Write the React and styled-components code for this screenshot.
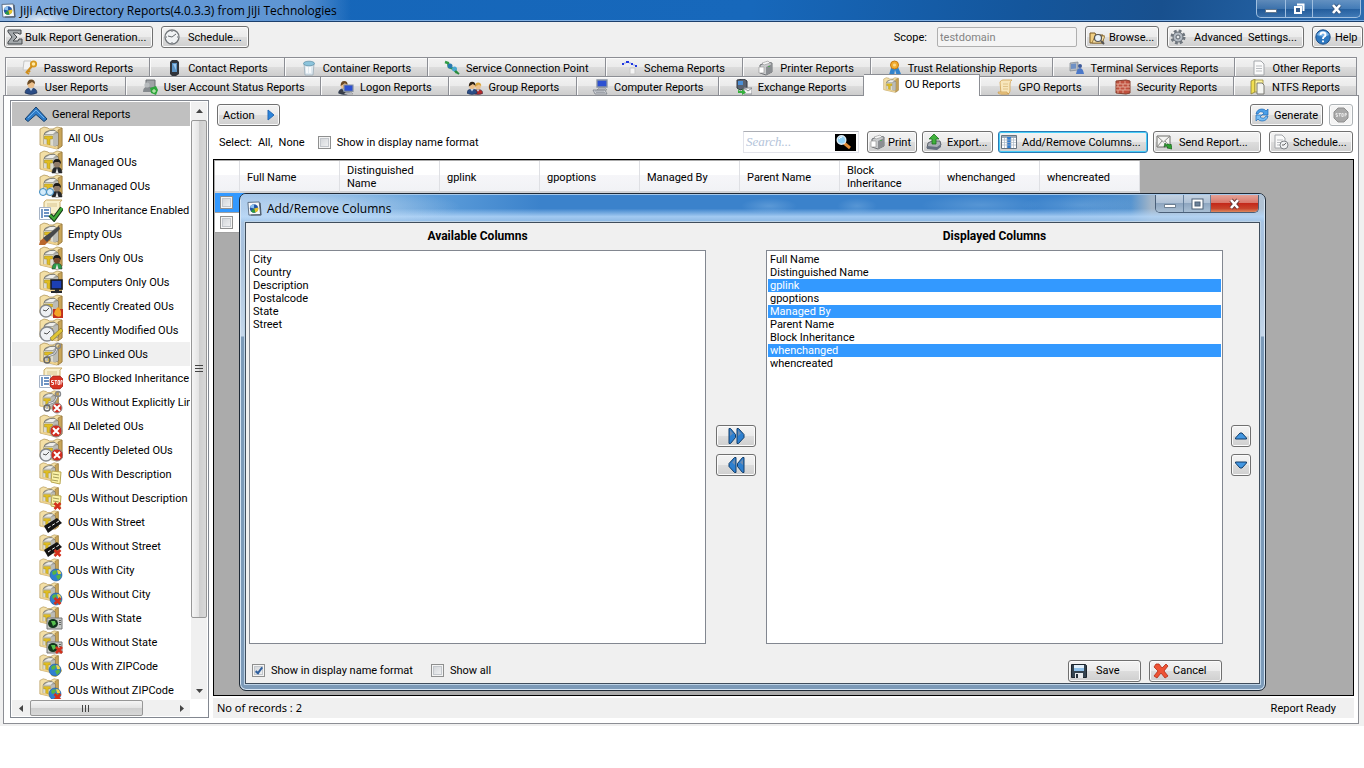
import React from "react";
import styled, { createGlobalStyle, css } from "styled-components";

const GlobalStyle = createGlobalStyle`
  *, *::before, *::after { box-sizing: border-box; }
  body { margin: 0; background: #fff; }
  body, button, input, select, table {
    font-family: Roboto, "Liberation Sans", Arial, sans-serif;
    font-size: 11px;
    line-height: 13px;
    color: #000;
  }
  svg { display: block; flex: none; }
`;

/* ---------- window frame ---------- */

const Window = styled.div`
  display: flex;
  flex-direction: column;
  background: #f0f0f0;
`;

const TitleBar = styled.header`
  display: flex;
  justify-content: space-between;
  height: 22px;
  border-bottom: 1px solid #1c3f6c;
  box-shadow: inset 0 -1px #7fb0e4;
  background: linear-gradient(100deg, #1565b8 0%, #1768bb 55%, #14569c 75%, #18508e 85%, #2b6cb0 100%);
`;

const Title = styled.h1`
  display: flex;
  align-items: center;
  gap: 4px;
  margin: 0;
  padding: 0 14px 0 1px;
  font: 400 12px/20px "Open Sans", sans-serif;
  white-space: nowrap;
  background:
    radial-gradient(ellipse 30px 10px at 42px 20px, rgba(255, 255, 255, 0.8), transparent),
    linear-gradient(90deg, #8db3e0, #6499d6 40%, #5e95d3 85%, transparent);
`;

const WindowButtons = styled.div`
  display: flex;
  margin-right: 3px;
  height: 18px;
  border: 1px solid #9fbfe0;
  border-top: 0;
  border-radius: 0 0 5px 5px;
  overflow: hidden;
`;

const WindowButton = styled.button`
  display: flex;
  align-items: center;
  justify-content: center;
  width: ${(p) => p.$width}px;
  padding: 0;
  border: 0;
  border-right: 1px solid ${(p) => (p.$glass ? "#66809c" : "#9fbfe0")};
  background: ${(p) => p.$danger
    ? "linear-gradient(#e5a297 0%, #d9796c 45%, #c4291a 50%, #c8452c 80%, #dd8a60 100%)"
    : p.$glass
      ? "linear-gradient(#c3d2e2 0%, #b0c2d6 45%, #8ea6c0 50%, #a9bfd4 100%)"
      : "linear-gradient(rgba(255,255,255,.28), rgba(255,255,255,.12) 50%, rgba(0,20,60,.12) 52%, rgba(255,255,255,.1))"};
  &:last-child { border-right: 0; }
`;

/* ---------- shared controls ---------- */

const Button = styled.button`
  display: flex;
  align-items: center;
  justify-content: ${(p) => p.$justify || "flex-start"};
  gap: ${(p) => p.$gap || 4}px;
  width: ${(p) => p.$width}px;
  height: 22px;
  flex: none;
  padding: 0 ${(p) => p.$pad ?? 3}px;
  border: 1px solid #707070;
  border-radius: 3px;
  background: linear-gradient(#f3f3f3 0%, #ebebeb 49%, #dddddd 50%, #cfcfcf 100%);
  box-shadow: inset 0 0 0 1px #fbfbfb;
  white-space: nowrap;
  ${(p) => p.$focused && css`
    border-color: #2a7bb5;
    box-shadow: inset 0 0 0 1px #48cdf8;
  `}
  &:disabled { border-color: #adb2b5; background: #f4f4f4; }
`;

const CheckLabel = styled.label`
  display: flex;
  align-items: center;
  gap: 6px;
  white-space: nowrap;
`;

const CheckBox = styled.input.attrs({ type: "checkbox" })`
  appearance: none;
  display: grid;
  place-items: center;
  width: 13px;
  height: 13px;
  margin: 0;
  border: 1px solid #8e8f8f;
  background: linear-gradient(135deg, #cdd0d4, #f5f6f7);
  box-shadow: inset 0 0 0 1px #f4f4f4, inset 0 0 0 2px #c3c7cc;
  &:checked::after {
    content: "";
    width: 4px;
    height: 8px;
    margin-bottom: 2px;
    border: solid #2f5f9e;
    border-width: 0 2px 2px 0;
    transform: rotate(38deg);
  }
`;

/* ---------- top toolbar and tabs ---------- */

const Toolbar = styled.div`
  display: flex;
  align-items: center;
  gap: 8px;
  padding: 4px 1px 9px 4px;
`;

const ScopeLabel = styled.label`
  display: flex;
  align-items: center;
  gap: 10px;
  margin-left: auto;
`;

const ScopeInput = styled.input`
  width: 140px;
  height: 20px;
  padding: 0 2px;
  border: 1px solid #afafaf;
  border-radius: 2px;
  background: #f4f4f4;
  color: #838383;
`;

const TabRow = styled.div`
  display: flex;
  height: 19px;
  padding: 0 7px 0 5px;
`;

const Tab = styled.button`
  display: flex;
  align-items: center;
  justify-content: center;
  gap: 6px;
  flex: ${(p) => p.$weight} 1 0;
  min-width: 0;
  padding: 2px 0 0;
  border: solid #8c8e94;
  border-width: 1px 1px 0 1px;
  background: linear-gradient(#f2f2f2 0%, #ebebeb 48%, #dddddd 50%, #cdcdcd 100%);
  box-shadow: inset 1px 1px #fbfbfb;
  white-space: nowrap;
  overflow: hidden;
  & + & { border-left-width: 0; }
  ${(p) => p.$active && css`
    z-index: 1;
    height: 22px;
    margin-top: -2px;
    padding: 0 0 2px;
    background: #fff;
    box-shadow: none;
  `}
`;

const Panel = styled.main`
  display: flex;
  gap: 4px;
  margin: 0 5px 2px 3px;
  padding: 4px 4px 5px 6px;
  border: 1px solid #8c8e94;
  background: #fff;
`;

/* ---------- report tree ---------- */

const Sidebar = styled.nav`
  display: grid;
  grid-template: 597px 17px / 178px 17px;
  flex: none;
  width: 199px;
  padding: 1px;
  border: 1px solid #828790;
`;

const ReportList = styled.ul`
  margin: 0;
  padding: 0;
  overflow: hidden;
  list-style: none;
`;

const GroupHeader = styled.li`
  display: flex;
  align-items: center;
  gap: 4px;
  height: 24px;
  padding-left: 12px;
  background: #c0c0c0;
`;

const ReportItem = styled.li`
  height: 24px;
  background: ${(p) => (p.$active ? "#f0f0f0" : "transparent")};
`;

const ReportLink = styled.a`
  display: flex;
  align-items: center;
  gap: 5px;
  height: 24px;
  padding-left: 27px;
  color: #000;
  text-decoration: none;
  white-space: nowrap;
`;

const ScrollTrack = styled.div`
  display: flex;
  flex-direction: ${(p) => (p.$vertical ? "column" : "row")};
  align-items: stretch;
  background: #f0f0f0;
  ${(p) => (p.$vertical ? "margin-left: 1px;" : "margin-top: 1px;")}
`;

const ScrollArrow = styled.span`
  display: grid;
  place-items: center;
  flex: 0 0 18px;
`;

const ScrollThumb = styled.span`
  display: grid;
  place-items: center;
  flex: ${(p) => p.$share} 1 0;
  border: 1px solid #979797;
  border-radius: 2px;
  background: linear-gradient(${(p) => (p.$vertical ? "90deg" : "180deg")}, #f5f5f5, #e4e4e4 48%, #cecece 50%, #d8d8d8);
`;

const ScrollRest = styled.span`
  flex: ${(p) => p.$share} 1 0;
`;

/* ---------- report area ---------- */

const Report = styled.section`
  display: flex;
  flex-direction: column;
  flex: 1;
  min-width: 0;
`;

const ActionRow = styled.div`
  display: flex;
  align-items: center;
  gap: 5px;
  height: 22px;
  margin: ${(p) => p.$top}px 1px 0 4px;
`;

const Push = styled.div`
  display: flex;
  align-items: center;
  gap: ${(p) => p.$gap || 5}px;
  margin-left: auto;
`;

const ToolGroup = styled.div`
  display: flex;
  gap: 8px;
`;

const SelectLinks = styled.div`
  display: flex;
  gap: 6px;
  margin: 0 8px 0 2px;
  a { color: #000; text-decoration: none; }
`;

const SearchBox = styled.div`
  display: flex;
  align-items: center;
  justify-content: space-between;
  width: 116px;
  height: 22px;
  margin-right: 3px;
  padding-right: 2px;
  border: 1px solid #e2e3ea;
  border-top-color: #abadb3;
  background: #fff;
`;

const SearchInput = styled.input.attrs({ type: "search" })`
  width: 88px;
  padding: 0 2px;
  border: 0;
  outline: 0;
  background: none;
  font: italic 13px/16px "Liberation Serif", serif;
  &::placeholder { color: #b4c4da; opacity: 1; }
`;

const SearchButton = styled.button`
  padding: 0;
  width: 21px;
  height: 17px;
  border: 0;
  background: #000;
`;

const GridArea = styled.div`
  position: relative;
  flex: 1;
  margin-top: 6px;
  padding: 1px;
  border: 1px solid #000;
  background: #ababab;
`;

const DataTable = styled.table`
  width: 925px;
  table-layout: fixed;
  border-collapse: separate;
  border-spacing: 0;
`;

const HeadCell = styled.th`
  width: ${(p) => p.$width}px;
  height: 32px;
  padding: ${(p) => (p.$narrow ? "2px 0 0" : "2px 16px 0 7px")};
  border-right: 1px solid #dfe0e4;
  border-bottom: 2px solid #d2d3d6;
  background: linear-gradient(#fff 0%, #fff 45%, #f6f6f9 48%, #f1f2f5 100%);
  font-weight: 400;
  text-align: left;
`;

const BodyCell = styled.td`
  height: 20px;
  padding: 0 0 0 5px;
  border-bottom: 1px solid #a0a0a0;
  background: ${(p) => (p.$selected ? "#3399ff" : "#fff")};
`;

const StatusBar = styled.footer`
  display: flex;
  align-items: center;
  justify-content: space-between;
  height: 20px;
  margin-top: 2px;
  padding: 0 18px 0 4px;
  background: #f0f0f0;
`;

const RecordCount = styled.span`
  font: 11px/18px "Noto Sans", sans-serif;
`;

/* ---------- add/remove columns window ---------- */

const Dialog = styled.div`
  position: absolute;
  top: 33px;
  right: 87px;
  bottom: 4px;
  left: 25px;
  display: flex;
  flex-direction: column;
  padding: 0 5px 6px;
  border: 1px solid #1f2a36;
  border-radius: 7px;
  background: linear-gradient(#a9c4e2 28px, #a8c0da 60px, #bfd3e8 130px, #c6d7ea 142px, #7c9ab8 143px);
  box-shadow: inset 0 0 0 1px #d6e5f4;
  overflow: hidden;
`;

const DialogBar = styled.div`
  display: flex;
  justify-content: space-between;
  height: 28px;
  flex: none;
  margin: 0 -4px;
  padding: 0 5px 0 6px;
  border-top: 1px solid #a6c8ea;
  background:
    radial-gradient(ellipse 150px 20px at 70px 12px, rgba(214, 231, 248, 0.7), transparent),
    linear-gradient(180deg, transparent 50%, rgba(180, 214, 248, 0.85) 80%, rgba(160, 196, 232, 0.8)),
    radial-gradient(ellipse 28px 8px at 528px 11px, rgba(150, 195, 235, 0.35), transparent),
    radial-gradient(ellipse 20px 8px at 616px 11px, rgba(150, 195, 235, 0.3), transparent),
    radial-gradient(ellipse 60px 10px at 740px 10px, rgba(150, 195, 235, 0.3), transparent),
    radial-gradient(ellipse 60px 10px at 840px 10px, rgba(150, 195, 235, 0.3), transparent),
    linear-gradient(90deg, #9cc0e6 0, #6fa8dc 130px, #5496d6 220px, #3b82cb 300px, #3b82cb 80%, #5593cf 87%, #a4b6c8 89%, #b2c3d4 100%);
`;

const DialogTitle = styled.h2`
  display: flex;
  align-items: center;
  gap: 5px;
  margin: 0;
  font: 400 12px/26px "Open Sans", sans-serif;
`;

const DialogButtons = styled(WindowButtons)`
  margin-right: 0;
  border-color: #4a5f78;
`;

const DialogBody = styled.div`
  display: grid;
  flex: 1;
  min-height: 0;
  grid-template: 27px 1fr 39px / 1fr 60px 1fr 36px;
  padding-left: 3px;
  border: 1px solid #3f4d5c;
  background: #f0f0f0;
  box-shadow: 0 0 0 1px #bcd2e6;
`;

const ColumnHeading = styled.label`
  grid-column: ${(p) => p.$col};
  align-self: center;
  font-size: 12px;
  font-weight: 700;
  text-align: center;
`;

const ColumnList = styled.select`
  grid-column: ${(p) => p.$col};
  grid-row: 2;
  width: 100%;
  height: 100%;
  margin: 0;
  padding: 2px 0;
  border: 1px solid #828790;
  border-radius: 0;
  outline: 0;
  background: #fff;
  overflow: auto;
  option {
    height: 13px;
    min-height: 13px;
    margin: 0 1px;
    padding: 0 2px;
    line-height: 13px;
  }
  option:checked {
    background: #3399ff linear-gradient(#3399ff, #3399ff);
    color: #fff;
    -webkit-text-fill-color: #fff;
  }
`;

const ButtonStack = styled.div`
  grid-row: 2;
  grid-column: ${(p) => p.$col};
  display: flex;
  flex-direction: column;
  align-items: center;
  justify-content: center;
  gap: 7px;
  padding-top: 6px;
`;

const DialogFooter = styled.div`
  grid-column: 1 / 4;
  grid-row: 3;
  display: flex;
  align-items: center;
  gap: 18px;
  padding: 14px 1px 0 3px;
`;

const FooterButtons = styled.div`
  display: flex;
  gap: 8px;
  margin-left: auto;
`;

/* ---------- drawings ---------- */

const Svg = ({ s = 16, w, h, vb = "0 0 16 16", children }) => (
  <svg width={w || s} height={h || s} viewBox={vb} aria-hidden="true">{children}</svg>
);

const AppIcon = () => (
  <Svg s={15}>
    <path d="M1 1.500L13 1l1.500 13.500L2 15z" fill="#f8fafc" stroke="#5a6b80" />
    <path d="M14 2l1 13H4" fill="none" stroke="#44505e" />
    <circle cx="7.500" cy="8" r="4.500" fill="#2456a6" />
    <path d="M7.500 8V3.500A4.500 4.500 0 0 0 3.200 7z" fill="#8fc3f0" />
    <path d="M7.500 8l4.400-1a4.500 4.500 0 0 1-3 5.300z" fill="#e6c22a" />
    <path d="M7.500 8l1.300 4.300A4.500 4.500 0 0 1 4 11z" fill="#2e9a3c" />
  </Svg>
);

const Globe = ({ x = 17, y = 17, r = 6 }) => (
  <g>
    <circle cx={x} cy={y} r={r} fill="#2f7fd0" stroke="#1c5596" strokeWidth=".6" />
    <path d={`M${x - 4} ${y - 3}q3-3 5-1l-1 3-3 1zM${x} ${y + 1}l4-2 1 3-3 3z`} fill="#56b443" />
    <path d={`M${x + 1} ${y - 5}q4 0 4 4l-3 0z`} fill="#ecd34a" />
  </g>
);

const RedX = ({ x = 18.500, y = 19, r = 3 }) => (
  <path d={`M${x - r} ${y - r}L${x + r} ${y + r}M${x + r} ${y - r}L${x - r} ${y + r}`} stroke="#d3301c" strokeWidth="2.600" />
);

const RedDisc = ({ x = 17, y = 17, r = 6 }) => (
  <g>
    <circle cx={x} cy={y} r={r} fill="#cf2b1e" stroke="#8d8d8d" />
    <path d={`M${x - 3} ${y - 3}l6 6m0-6l-6 6`} stroke="#fff" strokeWidth="2" />
  </g>
);

const Clock = ({ x = 7, y = 17, r = 6 }) => (
  <g>
    <circle cx={x} cy={y} r={r} fill="#eef0f3" stroke="#85888d" strokeWidth="1.400" />
    <path d={`M${x} ${y}l3-3M${x} ${y}l-3-1`} stroke="#555" />
  </g>
);

const Person = ({ x = 18, y = 12, body = "#25272c", skin = "#8f7a68" }) => (
  <g>
    <path d={`M${x - 5} ${y + 11}q0-6 5-6t5 6z`} fill={body} stroke="#222" strokeWidth=".5" />
    <circle cx={x} cy={y + 2} r="3.400" fill={skin} />
    <path d={`M${x - 4} ${y + 2}q0-5 4-5t4 5l-2-2h-4z`} fill="#1c1a18" />
    <path d={`M${x} ${y + 6}l1.500 5h-3z`} fill="#e8e8e8" />
  </g>
);

const Folder = ({ small }) => (
  <g transform={small ? "scale(.84)" : undefined}>
    <path d="M1 3l4-2 4 1 1 1 4 0 4-2 5 1v18l-5 3L1 19z" fill="#f3dfa6" stroke="#b4985a" strokeWidth=".8" />
    <path d="M19 4l4-2v18l-4 3z" fill="#c9a558" stroke="#8d6f38" strokeWidth=".6" />
    <path d="M5 9q0-3 4-4l6-1 4 3v12l-5 2-9-2z" fill="#a8a8a2" stroke="#6d6c64" strokeWidth=".8" />
    <path d="M6 8l5-3 6 0-3 3z" fill="#eeeeea" />
    <path d="M5 9h9v11l-9-2z" fill="#dedccf" />
    <path d="M14 9l5-2v12l-5 2z" fill="#bcbcb6" />
    <path d="M5.500 10h8v3h-2.500V19l-3-.5V13H5.500z" fill="#e0bd22" stroke="#a08820" strokeWidth=".5" />
    <path d="M1 19l5-1 12 3v2z" fill="#efd28c" />
  </g>
);

const Scroll24 = () => (
  <g>
    <path d="M5 4q2-3 5-2h13q-3 2-2 5v9H5z" fill="#f8efcb" stroke="#c9ac68" />
    <path d="M8 6h10M8 8h10" stroke="#d9c590" />
    <path d="M.5 9.500h11v12H.5z" fill="#fff" stroke="#a7b4c6" />
    <path d="M3 11v9M5 12h5M5 15h5M5 18h5" stroke="#3d6fae" strokeWidth="1.400" />
  </g>
);

const Note = () => (
  <g>
    <path d="M13 9l9 1-1 12-9-2z" fill="#fbf3a8" stroke="#b8a650" />
    <path d="M14 12l6 1M14 15l6 1M13 18l6 1" stroke="#a39b57" />
  </g>
);

const Road = () => (
  <g>
    <path d="M5 16l13-8 5 5-14 10z" fill="#141414" />
    <path d="M9 18l11-7" stroke="#fff" strokeDasharray="3 2" />
  </g>
);

const StateMap = () => (
  <g>
    <path d="M8 12h15v11H8z" fill="#c5c8c4" stroke="#777" />
    <ellipse cx="14" cy="17.500" rx="5" ry="4.500" fill="#12351c" />
    <path d="M12 15l4 0 1 3-3 2z" fill="#57c04f" />
    <path d="M21 14v6" stroke="#444" strokeWidth="1.500" strokeDasharray="1 1" />
  </g>
);

const Chain = () => (
  <g fill="none">
    <path d="M8 19q-1-5 4-6t6-7" stroke="#85888c" strokeWidth="2.400" />
    <path d="M8 19q-1-5 4-6t6-7" stroke="#e6e8ea" />
    <circle cx="19" cy="4" r="2.500" stroke="#85888c" strokeWidth="1.400" />
    <circle cx="8" cy="18" r="3" stroke="#666" strokeWidth="1.400" />
  </g>
);

const badges = {
  all: null,
  managed: <Person />,
  unmanaged: <><Person /><circle cx="4" cy="18" r="3.500" fill="#d4ecfa" stroke="#3a8ac4" /><circle cx="11" cy="18" r="3.500" fill="#d4ecfa" stroke="#3a8ac4" /></>,
  empty: <><path d="M1 19l7-6 4 4-6 6H0z" fill="#b9662c" /><path d="M4 16L20 4l1 3L8 20z" fill="#47484a" /></>,
  users: <Person body="#2b9a4a" skin="#7a4a2c" />,
  computers: <><path d="M12 10h11v9H12z" fill="#1c3fb4" stroke="#16181c" strokeWidth="1.500" /><path d="M16 19h4v2h3v2H12v-2h4z" fill="#26282c" /></>,
  created: <><Clock /><path d="M14 15h10v9H14z" fill="#c3301c" /><path d="M15 20q1-5 4-7 4 3 3 9-4 2-7-2z" fill="#f3a426" /></>,
  modified: <><Clock r={7} x={8} y={16} /><path d="M11 20L22 10l2 3-11 10z" fill="#e0c535" stroke="#786a28" strokeWidth=".6" /></>,
  linked: <Chain />,
  unlinked: <><Chain /><RedDisc x={18} y={18} r={5} /></>,
  deleted: <RedDisc />,
  recentDeleted: <><Clock /><RedDisc x={18} /></>,
  note: <Note />,
  noNote: <><Note /><RedX y={20} /></>,
  road: <Road />,
  noRoad: <><Road /><RedX /></>,
  city: <Globe />,
  noCity: <><Globe /><RedX /></>,
  state: <StateMap />,
  noState: <><StateMap /><RedX x={20} y={20} /></>,
  zip: <><path d="M12 22l9-9 2 4-6 6z" fill="#e0ba3a" /><Globe x={16} y={16} /></>,
  noZip: <><Globe x={16} y={16} /><RedX /></>,
};

const compact = new Set(["note", "noNote", "road", "noRoad", "city", "noCity", "state", "noState", "zip", "noZip", "unlinked"]);

const ReportIcon = ({ kind }) => (
  <Svg s={24} vb="0 0 24 24">
    {kind === "inherit" && <><Scroll24 /><path d="M11 17l4 4 8-11" fill="none" stroke="#143a14" strokeWidth="4.500" /><path d="M11 17l4 4 8-11" fill="none" stroke="#3fa93a" strokeWidth="2.400" /></>}
    {kind === "blocked" && <><Scroll24 /><path d="M14 10h7l3 3v7l-3 3h-7l-3-3v-7z" fill="#d63222" stroke="#8d1a10" strokeWidth=".6" /><path d="M12.500 18.500h2v-2h-2v-2h2M15.500 14.500h2.500m-1.200 0v4M19 14.500h1.600v4H19zM22 18.500v-4h1.200v2" fill="none" stroke="#fff" strokeWidth=".9" /></>}
    {kind !== "inherit" && kind !== "blocked" && <><Folder small={compact.has(kind)} />{badges[kind]}</>}
  </Svg>
);

const User = ({ x = 8, hair = "#6a4a24", coat = "#2b4d86", k = 1 }) => (
  <g transform={`translate(${x - 8 * k} ${16 - 16 * k}) scale(${k})`}>
    <path d="M2 14q0-5 6-5t6 5q-6 3-12 0z" fill={coat} stroke="#1c2c4c" strokeWidth=".6" />
    <path d="M6 9l2 3 2-3z" fill="#c8d8e8" />
    <circle cx="8" cy="5.500" r="3.500" fill="#ecc08c" />
    <path d="M4.200 6q0-5.500 4-5.500T12 5L9 3z" fill={hair} />
  </g>
);

const Screen = ({ x = 5, y = 6, s = 1 }) => (
  <g transform={`translate(${x} ${y}) scale(${s})`}>
    <path d="M0 0h10v7H0z" fill="#2c50d2" stroke="#8590a2" strokeWidth="1.300" />
    <path d="M2 8h6l2 2H0z" fill="#c9ccd2" stroke="#777" strokeWidth=".5" />
  </g>
);

const Paper = ({ x = 3, y = 1, w = 10, h = 14 }) => (
  <g>
    <path d={`M${x} ${y}h${w - 3}l3 3v${h - 3}h-${w}z`} fill="#fafafa" stroke="#a3a6aa" />
    <path d={`M${x + 2} ${y + 5}h${w - 4}M${x + 2} ${y + 7.5}h${w - 4}M${x + 2} ${y + 10}h${w - 4}`} stroke="#b9bcc0" />
  </g>
);

const PrinterShape = () => (
  <g>
    <path d="M2 5l7-3 5 1v9l-6 3-6-2z" fill="#c9cbcd" stroke="#6d7074" />
    <path d="M8 7l6-3v8l-6 3z" fill="#8b8e92" />
    <path d="M1 7h5v6H1z" fill="#fff" stroke="#999" strokeWidth=".7" />
    <path d="M4 3l6-2 2 2-6 2z" fill="#f4f4f4" stroke="#888" strokeWidth=".5" />
    <path d="M11 6v1" stroke="#3cae45" strokeWidth="1.500" />
  </g>
);

const icons = {
  password: <><path d="M2 1h7v9H1z" fill="#f3f3f3" stroke="#c5c5c5" /><circle cx="11.500" cy="4" r="2.700" fill="#ffe9a4" stroke="#d89a20" strokeWidth="1.800" /><path d="M10 6l-6 7M6 10l2 2M4 12l3 2" stroke="#cf8d1c" strokeWidth="2" /></>,
  contact: <><path d="M6 0h5l2 2v12l-3 2H6l-2-2V2z" fill="#30343a" /><path d="M6 3h5v9H6z" fill="#5b93c4" /><path d="M7 4l3 0v6z" fill="#9cc6ea" /></>,
  container: <><path d="M3 4h10l-1 11H4z" fill="#dfe9f0" stroke="#9aacb8" strokeWidth=".8" /><ellipse cx="8" cy="3.500" rx="5.500" ry="2.300" fill="#8cc4dc" stroke="#5a8ca4" strokeWidth=".7" /><path d="M6 7v6M9 7v6" stroke="#fff" strokeWidth="1.500" /></>,
  service: <><path d="M1 2l3 1 1 4 5 2 3 4" fill="none" stroke="#2f9c46" strokeWidth="2.500" /><circle cx="6" cy="6" r="2.500" fill="#287ab0" /><circle cx="10.500" cy="9" r="2.500" fill="#49a7d0" /><path d="M11 11l4 3" stroke="#2a8a3e" strokeWidth="2" /></>,
  schema: <><path d="M4 2h3M0 4h2M9 4h2M13 6h2" stroke="#2038e0" strokeWidth="2" /><path d="M2 3h2M7 3h2M11 5h2" stroke="#8a9cf0" /><path d="M8 8h5v6H8z" fill="#f4f4f4" stroke="#c8c8c8" /></>,
  printer: <PrinterShape />,
  trust: <><path d="M5 8L3 15l3-1 2 2 1-6 2 6 2-2 2 0-3-7z" fill="#3384cc" /><circle cx="8.500" cy="5" r="4" fill="#f3ac2e" stroke="#c87a12" /><circle cx="8.500" cy="5" r="1.600" fill="#fbd78a" /></>,
  terminal: <><path d="M1 3l8-1v8l-8 1z" fill="#b6bbc2" stroke="#80868f" strokeWidth=".7" /><path d="M2 4l5-.5v5L2 9z" fill="#6e90c4" /><circle cx="11" cy="6" r="2" fill="#3d5a9a" /><path d="M7 14q1-6 4-6t4 6z" fill="#4b78c8" /></>,
  other: <Paper />,
  user: <User />,
  account: <><path d="M4 1h9v8H4z" fill="#9fa3a6" stroke="#6b6f72" /><path d="M1 13q0-5 4-5t4 5z" fill="#858a8e" /><circle cx="5" cy="6" r="2.600" fill="#b7bbbd" /><path d="M8 9l6-2 2 4-2 5-5-2z" fill="#2da53c" /><path d="M10 12h4m-2-2v4" stroke="#d7f4c4" /></>,
  logon: <><User x={6} k={0.9} coat="#3a3f48" /><Screen x={6} y={6} s={0.9} /></>,
  group: <><User x={11} k={0.8} hair="#dca83e" coat="#b52a2a" /><User x={5} k={0.85} hair="#2f2216" coat="#2b4d86" /></>,
  computer: <><Screen x={5} y={1} s={1} /><path d="M1 11h12l2 4H3z" fill="#cfd2d8" stroke="#70757e" strokeWidth=".7" /><path d="M3 12h9M4 13.500h9" stroke="#7d838c" strokeWidth=".6" /></>,
  exchange: <><path d="M1 1l7-1 3 2v7l-7 2-3-2z" fill="#5a6270" stroke="#30353e" /><path d="M2 2h5v4H2z" fill="#4b8fd6" /><path d="M8 9h8v6H8z" fill="#f6f6f6" stroke="#8a8d92" /><path d="M8 9l4 3 4-3" fill="none" stroke="#8a8d92" /><path d="M2 9l1 3h3v-2l4 3.500L6 16v-2H2z" fill="#35b03c" /></>,
  gpo: <><path d="M3 3q1-2 3-2h9q-2 1-2 4v7q0 3-3 3H4z" fill="#f8e6bb" stroke="#d8b06a" /><path d="M1 13h9q0 2 2 2H3q-2 0-2-2z" fill="#efcd8c" stroke="#c9994c" strokeWidth=".7" /><path d="M6 5h5M6 7.500h5M6 10h5" stroke="#e0c48a" /></>,
  security: <><path d="M1 2l10-1 4 1v12l-4 1-10-1z" fill="#c0503e" stroke="#87402f" /><path d="M1 5h14M1 8h14M1 11h14M5 2v3M10 2v3M3 5v3M8 5v3M13 5v3M5 8v3M10 8v3M3 11v3M8 11v3" stroke="#e9b8a4" strokeWidth=".8" /></>,
  ntfs: <><path d="M1 2l4-2v13l-4 2z" fill="#f1df52" stroke="#8d8130" strokeWidth=".8" /><path d="M5 1h8v12H5z" fill="#fff6a0" stroke="#9a8d3c" strokeWidth=".8" /><path d="M7 4h5l2 2v9H7z" fill="#f4f5f2" stroke="#6d6e66" strokeWidth=".9" /></>,
  bulk: <path d="M1 1h13v4h-2L11 4H6l4 4-4 4h5l1-2 3 0v5H1v-2l4-5-4-5z" fill="#a4a9ac" stroke="#44494c" strokeWidth="1" />,
  clock: <><circle cx="8" cy="8" r="7" fill="#f0f2f4" stroke="#73777b" strokeWidth="1.300" /><path d="M8 8l4-3M8 8L4 7M8 13v1M8 2v1M2 8h1M13 8h1" stroke="#666a6e" /></>,
  browse: <><path d="M1 4h5l1 2h7v8H1z" fill="#f0cf83" stroke="#7d5d24" /><path d="M3 14l3-7h10l-3 7z" fill="#f7e2ab" stroke="#8a6a30" strokeWidth=".8" /><circle cx="9" cy="9" r="3.500" fill="#e8f2fa" stroke="#555" strokeWidth="1.200" /><path d="M12 12l3 3" stroke="#555" strokeWidth="2" /></>,
  gear: <><circle cx="8" cy="8" r="6" fill="none" stroke="#70777f" strokeWidth="3" strokeDasharray="2.700 2" /><circle cx="8" cy="8" r="5" fill="#b4bbc3" stroke="#666d75" /><circle cx="8" cy="8" r="2" fill="#e7eaec" stroke="#5d646c" /></>,
  help: <><circle cx="8" cy="8" r="7.200" fill="#2e78c0" stroke="#1d4f8a" /><path d="M2 6a6.500 6.500 0 0 1 12 0q-6 3-12 0z" fill="#78b2e6" /><path d="M5.500 6q0-2.500 2.500-2.500T10.500 6q0 1-1.300 1.800T8 10M8 11.500v1.800" fill="none" stroke="#fff" strokeWidth="1.900" /></>,
  refresh: <><path d="M2 7q1-5 6-5 3 0 4 2l2-2v6H8l2-2q-4-3-6 1z" fill="#4a9fe8" stroke="#1b67b4" strokeWidth=".7" /><path d="M14 9q-1 5-6 5-3 0-4-2l-2 2V8h6l-2 2q4 3 6-1z" fill="#77bdf4" stroke="#1b67b4" strokeWidth=".7" /></>,
  stop: <><path d="M5 1h6l4 4v6l-4 4H5l-4-4V5z" fill="#a8a8a8" stroke="#8f8f8f" /><path d="M4.500 6.500H3v1.500h1.500v1.500H3M5.500 6.500H8M6.700 6.500v3M8.800 6.500h1.400v3H8.800zM12 9.500v-3h1.300V8H12" fill="none" stroke="#f0f0f0" strokeWidth=".8" /></>,
  exportIcon: <><path d="M2 9l4-2h8l1 4-4 4-10-1z" fill="#a9aeb6" stroke="#5d6269" /><path d="M1 12l10 1 4-3v3l-4 3-10-1z" fill="#667080" /><path d="M8 0l5 5h-3v5H6V5H3z" fill="#3fb13c" stroke="#1c6e1f" strokeWidth=".8" /></>,
  columns: <><path d="M.5 1.500h15v13H.5z" fill="#fff" stroke="#67737f" /><path d="M1 2h14v2H1z" fill="#9aa9b8" /><path d="M6 3h4v11H6z" fill="#2f7cd0" /><path d="M1 6h14M1 8.500h14M1 11h14M3.500 4v10M6 4v10M10 4v10M12.500 4v10" stroke="#a9b6c3" strokeWidth=".7" /></>,
  send: <><path d="M1 2h13v11H1z" fill="#f4f4f2" stroke="#6e6e6a" /><path d="M1 2l6.500 6L14 2M1 13l5-6M14 13L9 7" fill="none" stroke="#8a8a86" /><path d="M9 9l1 2q2-2 4 0l1-1 1 5-5-1 1-1q-2-2-4 0z" fill="#2da32f" stroke="#17601a" strokeWidth=".7" /></>,
  report: <><Paper x={2} y={1} w={10} h={13} /><circle cx="11" cy="11" r="4" fill="#f0f1f2" stroke="#808488" /><path d="M11 11l2-2M11 11H9" stroke="#666" /></>,
  save: <><path d="M.5 1.500h14l1 1v12H.5z" fill="#34434f" stroke="#1d262e" /><path d="M3 2h10v6H3z" fill="#e2f0fb" /><path d="M3 5h10v3H3z" fill="#8fc1ea" /><path d="M4 10h8v5H4z" fill="#e8eaec" /><path d="M5 11h2v4H5z" fill="#28323a" /></>,
  cancel: <path d="M3 1l3 0 3 4 4-4 2 2-4 5 4 5-3 2-4-5-4 5-3-2 4-5-4-4z" fill="#ee5335" stroke="#b22c14" strokeWidth=".8" />,
};

const Icon = ({ name, size = 16 }) => {
  if (name === "ou") return <Svg s={size} vb="0 0 24 24"><Folder /></Svg>;
  return <Svg s={size}>{icons[name]}</Svg>;
};

const Magnifier = () => (
  <Svg w={21} h={17} vb="0 0 21 17">
    <path d="M9 9l6 5" stroke="#e08b35" strokeWidth="3" />
    <circle cx="6.500" cy="6" r="4.300" fill="#8fd0f4" stroke="#dcebf5" strokeWidth="1.400" />
    <path d="M4 5q1-2 3-2" stroke="#fff" fill="none" />
  </Svg>
);

const MinimizeIcon = () => (
  <Svg w={14} h={12} vb="0 0 14 12"><path d="M1.500 6.500h11v3h-11z" fill="#fff" stroke="#56697e" strokeWidth=".8" /></Svg>
);
const RestoreIcon = () => (
  <Svg w={12} h={12} vb="0 0 12 12">
    <path d="M4 1.500h6.500V8" fill="none" stroke="#fff" strokeWidth="2" />
    <path d="M2 4h6v6H2z" fill="#32598a" stroke="#fff" strokeWidth="2" />
  </Svg>
);
const MaximizeIcon = () => (
  <Svg w={13} h={12} vb="0 0 13 12">
    <path d="M2.500 2.500h8v7h-8z" fill="#6c829a" stroke="#4d6076" strokeWidth="4" />
    <path d="M2.500 2.500h8v7h-8z" fill="none" stroke="#fff" strokeWidth="2" />
  </Svg>
);
const CloseIcon = ({ edge = "#3b5c85" }) => (
  <Svg w={13} h={12} vb="0 0 13 12">
    <path d="M3 2l7 8M10 2l-7 8" stroke={edge} strokeWidth="4.400" />
    <path d="M3 2l7 8M10 2l-7 8" stroke="#fff" strokeWidth="2.600" />
  </Svg>
);

const Chevron = () => (
  <Svg w={24} h={16} vb="0 0 24 16">
    <path d="M1 13L12 1l11 12-3 2.500-8-7-8 7z" fill="#2f7cc8" stroke="#15406e" />
    <path d="M4 12l8-8 8 8" fill="none" stroke="#6fb2ee" />
  </Svg>
);

const Small = ({ d, w = 7, h = 7 }) => (
  <Svg w={w} h={h} vb={`0 0 ${w} ${h}`}><path d={d} fill="#444" /></Svg>
);

const Fast = ({ back }) => (
  <Svg w={17} h={16} vb="0 0 17 16">
    <g transform={back ? "matrix(-1 0 0 1 17 0)" : undefined} fill="#2e80d0" stroke="#123c68">
      <path d="M1 .5h1.500l5 6v3l-5 6H1z" />
      <path d="M9 .5h1.500l5.500 6v3l-5.500 6H9z" />
      <path d="M2 2l3 3.500L2 8zM10 2l3 3.500L10 8z" fill="#6d8db2" stroke="none" />
    </g>
  </Svg>
);

const Move = ({ down }) => (
  <Svg w={12} h={8} vb="0 0 12 8">
    <path d={down ? "M.5 1h11v1L7 7H5L.5 2z" : "M.5 7h11V6L7 1H5L.5 6z"} fill="#4397e2" stroke="#123c68" />
  </Svg>
);

/* ---------- data ---------- */

const upperTabs = [
  ["Password Reports", "password", 144], ["Contact Reports", "contact", 135],
  ["Container Reports", "container", 143], ["Service Connection Point", "service", 178],
  ["Schema Reports", "schema", 137], ["Printer Reports", "printer", 128],
  ["Trust Relationship Reports", "trust", 183], ["Terminal Services Reports", "terminal", 182],
  ["Other Reports", "other", 122],
];

const lowerTabs = [
  ["User Reports", "user", 120], ["User Account Status Reports", "account", 196],
  ["Logon Reports", "logon", 128], ["Group Reports", "group", 128],
  ["Computer Reports", "computer", 142], ["Exchange Reports", "exchange", 145],
  ["OU Reports", "ou", 116], ["GPO Reports", "gpo", 119],
  ["Security Reports", "security", 135], ["NTFS Reports", "ntfs", 123],
];

const reports = [
  ["All OUs", "all"], ["Managed OUs", "managed"], ["Unmanaged OUs", "unmanaged"],
  ["GPO Inheritance Enabled", "inherit"], ["Empty OUs", "empty"], ["Users Only OUs", "users"],
  ["Computers Only OUs", "computers"], ["Recently Created OUs", "created"],
  ["Recently Modified OUs", "modified"], ["GPO Linked OUs", "linked"],
  ["GPO Blocked Inheritance", "blocked"], ["OUs Without Explicitly Link", "unlinked"],
  ["All Deleted OUs", "deleted"], ["Recently Deleted OUs", "recentDeleted"],
  ["OUs With Description", "note"], ["OUs Without Description", "noNote"],
  ["OUs With Street", "road"], ["OUs Without Street", "noRoad"],
  ["OUs With City", "city"], ["OUs Without City", "noCity"],
  ["OUs With State", "state"], ["OUs Without State", "noState"],
  ["OUs With ZIPCode", "zip"], ["OUs Without ZIPCode", "noZip"],
];

const displayed = [
  "Full Name", "Distinguished Name", "gplink", "gpoptions", "Managed By",
  "Parent Name", "Block Inheritance", "whenchanged", "whencreated",
];
const available = ["City", "Country", "Description", "Postalcode", "State", "Street"];

const Tabs = ({ items }) => (
  <TabRow role="tablist">
    {items.map(([label, icon, weight]) => (
      <Tab key={label} role="tab" $weight={weight} $active={label === "OU Reports"} aria-selected={label === "OU Reports"}>
        <Icon name={icon} />{label}
      </Tab>
    ))}
  </TabRow>
);

const ReportTree = () => (
  <Sidebar aria-label="General Reports">
    <ReportList>
      <GroupHeader><Chevron />General Reports</GroupHeader>
      {reports.map(([label, kind]) => (
        <ReportItem key={label} $active={label === "GPO Linked OUs"}>
          <ReportLink href="#"><ReportIcon kind={kind} />{label}</ReportLink>
        </ReportItem>
      ))}
    </ReportList>
    <ScrollTrack $vertical aria-hidden="true">
      <ScrollArrow><Small d="M0 5l3.500-4L7 5z" /></ScrollArrow>
      <ScrollThumb $vertical $share={498}><Small w={8} h={9} d="M0 0h8v1H0zM0 3h8v1H0zM0 6h8v1H0z" /></ScrollThumb>
      <ScrollRest $share={63} />
      <ScrollArrow><Small d="M0 2l3.500 4L7 2z" /></ScrollArrow>
    </ScrollTrack>
    <ScrollTrack aria-hidden="true">
      <ScrollArrow><Small d="M5 0L1 3.500 5 7z" /></ScrollArrow>
      <ScrollThumb $share={113}><Small w={9} h={7} d="M0 0h1v7H0zM3 0h1v7H3zM6 0h1v7H6z" /></ScrollThumb>
      <ScrollRest $share={29} />
      <ScrollArrow><Small d="M2 0l4 3.500L2 7z" /></ScrollArrow>
    </ScrollTrack>
  </Sidebar>
);

const ColumnsDialog = () => (
  <Dialog role="dialog" aria-labelledby="columns-title">
    <DialogBar>
      <DialogTitle id="columns-title"><AppIcon />Add/Remove Columns</DialogTitle>
      <DialogButtons>
        <WindowButton $glass $width={28} aria-label="Minimize"><MinimizeIcon /></WindowButton>
        <WindowButton $glass $width={27} aria-label="Maximize"><MaximizeIcon /></WindowButton>
        <WindowButton $danger $width={47} aria-label="Close"><CloseIcon edge="#6e3a38" /></WindowButton>
      </DialogButtons>
    </DialogBar>
    <DialogBody>
      <ColumnHeading $col={1} htmlFor="available">Available Columns</ColumnHeading>
      <ColumnHeading $col={3} htmlFor="displayed">Displayed Columns</ColumnHeading>
      <ColumnList id="available" multiple $col={1} defaultValue={[]}>
        {available.map((c) => <option key={c}>{c}</option>)}
      </ColumnList>
      <ButtonStack $col={2}>
        <Button $width={40} $justify="center" aria-label="Add"><Fast /></Button>
        <Button $width={40} $justify="center" aria-label="Remove"><Fast back /></Button>
      </ButtonStack>
      <ColumnList id="displayed" multiple $col={3} defaultValue={["gplink", "Managed By", "whenchanged"]}>
        {displayed.map((c) => <option key={c}>{c}</option>)}
      </ColumnList>
      <ButtonStack $col={4}>
        <Button $width={20} $pad={0} $justify="center" aria-label="Move up"><Move /></Button>
        <Button $width={20} $pad={0} $justify="center" aria-label="Move down"><Move down /></Button>
      </ButtonStack>
      <DialogFooter>
        <CheckLabel><CheckBox defaultChecked />Show in display name format</CheckLabel>
        <CheckLabel><CheckBox />Show all</CheckLabel>
        <FooterButtons>
          <Button $width={73} $gap={9} $pad={2}><Icon name="save" />Save</Button>
          <Button $width={73}><Icon name="cancel" />Cancel</Button>
        </FooterButtons>
      </DialogFooter>
    </DialogBody>
  </Dialog>
);

export default function App() {
  return (
    <>
      <GlobalStyle />
      <Window>
        <TitleBar>
          <Title><AppIcon />JiJi Active Directory Reports(4.0.3.3) from JiJi Technologies</Title>
          <WindowButtons>
            <WindowButton $width={29} aria-label="Minimize"><MinimizeIcon /></WindowButton>
            <WindowButton $width={27} aria-label="Restore"><RestoreIcon /></WindowButton>
            <WindowButton $width={47} aria-label="Close"><CloseIcon /></WindowButton>
          </WindowButtons>
        </TitleBar>
        <Toolbar>
          <Button $width={149} $gap={2} $pad={2}><Icon name="bulk" />Bulk Report Generation...</Button>
          <Button $width={88} $gap={8} $pad={2}><Icon name="clock" />Schedule...</Button>
          <ScopeLabel>Scope:<ScopeInput defaultValue="testdomain" disabled /></ScopeLabel>
          <Button $width={74}><Icon name="browse" />Browse...</Button>
          <Button $width={137} $gap={8} $pad={2}><Icon name="gear" />{"Advanced \u00a0Settings..."}</Button>
          <Button $width={51} $pad={2}><Icon name="help" />Help</Button>
        </Toolbar>
        <Tabs items={upperTabs} />
        <Tabs items={lowerTabs} />
        <Panel>
          <ReportTree />
          <Report>
            <ActionRow $top={4}>
              <Button $width={63} $gap={12} $pad={5}>Action<Svg w={8} h={12} vb="0 0 8 12"><path d="M1 1l6 5-6 5z" fill="#2c86dd" stroke="#2267b4" /></Svg></Button>
              <Push $gap={6}>
                <Button $width={73}><Icon name="refresh" />Generate</Button>
                <Button $width={24} $justify="center" disabled aria-label="Stop"><Icon name="stop" /></Button>
              </Push>
            </ActionRow>
            <ActionRow $top={5}>
              <SelectLinks>Select:<a href="#">All,</a><a href="#">None</a></SelectLinks>
              <CheckLabel><CheckBox />Show in display name format</CheckLabel>
              <Push>
                <SearchBox>
                  <SearchInput placeholder="Search..." aria-label="Search" />
                  <SearchButton aria-label="Run search"><Magnifier /></SearchButton>
                </SearchBox>
                <Button $width={50} $gap={2} $pad={2}><Icon name="printer" />Print</Button>
                <Button $width={71} $gap={5}><Icon name="exportIcon" />Export...</Button>
                <Button $width={150} $gap={5} $pad={2} $focused><Icon name="columns" />Add/Remove Columns...</Button>
                <ToolGroup>
                  <Button $width={108} $gap={7} $pad={2}><Icon name="send" />Send Report...</Button>
                  <Button $width={84}><Icon name="report" />Schedule...</Button>
                </ToolGroup>
              </Push>
            </ActionRow>
            <GridArea>
              <DataTable>
                <thead>
                  <tr>
                    <HeadCell $width={25} $narrow />
                    {displayed.map((c) => <HeadCell key={c} $width={100}>{c}</HeadCell>)}
                  </tr>
                </thead>
                <tbody>
                  {[true, false].map((selected, i) => (
                    <tr key={i}>
                      <BodyCell $selected={selected}><CheckBox aria-label={`Select record ${i + 1}`} /></BodyCell>
                      {displayed.map((c) => <BodyCell key={c} $selected={selected} />)}
                    </tr>
                  ))}
                </tbody>
              </DataTable>
              <ColumnsDialog />
            </GridArea>
            <StatusBar>
              <RecordCount>No of records : 2</RecordCount>
              <span>Report Ready</span>
            </StatusBar>
          </Report>
        </Panel>
      </Window>
    </>
  );
}
